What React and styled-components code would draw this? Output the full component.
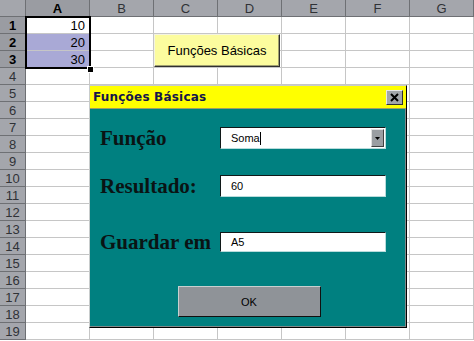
import React from 'react';
import styled, { createGlobalStyle } from 'styled-components';

const GlobalStyle = createGlobalStyle`
  html, body {
    margin: 0;
    padding: 0;
    background: #ffffff;
    overflow: hidden;
  }
  body {
    font-family: 'Liberation Sans', Arial, sans-serif;
  }
`;

const COLS = ['A', 'B', 'C', 'D', 'E', 'F', 'G'];
const ROWS = Array.from({ length: 19 }, (_, i) => i + 1);
const DATA = { 1: '10', 2: '20', 3: '30' };

// Planilha de fundo
const Sheet = styled.div`
  position: relative;
  width: 474px;
  height: 341px;
  display: grid;
  grid-template-columns: 26px repeat(7, 64px);
  grid-template-rows: 17px repeat(19, 17px);
  background: #ffffff;
  overflow: hidden;
`;

const Corner = styled.div`
  background: #a4a6ac;
  border-right: 1px solid #6e7074;
  border-bottom: 1px solid #6e7074;
  box-sizing: border-box;
`;

const ColHeader = styled.div`
  background: ${p => (p.$active ? '#9a9ca2' : '#a4a6ac')};
  border-right: 1px solid #6e7074;
  border-bottom: 1px solid #6e7074;
  box-sizing: border-box;
  display: flex;
  align-items: center;
  justify-content: center;
  font-size: 13px;
  font-weight: ${p => (p.$active ? 'bold' : 'normal')};
  color: ${p => (p.$active ? '#000000' : '#303236')};
`;

const RowHeader = styled(ColHeader)`
  font-size: 13px;
`;

const Cell = styled.div`
  background: ${p => (p.$selected ? '#a9a9d6' : '#ffffff')};
  border-right: 1px solid #c6c6c6;
  border-bottom: 1px solid #c6c6c6;
  box-sizing: border-box;
  display: flex;
  align-items: center;
  justify-content: flex-end;
  padding-right: 4px;
  font-size: 13px;
  color: #000000;
`;

const Selection = styled.div`
  position: absolute;
  left: 25px;
  top: 16px;
  width: 66px;
  height: 53px;
  border: 2px solid #000000;
  box-sizing: border-box;
  pointer-events: none;
`;

const FillHandle = styled.div`
  position: absolute;
  left: 87px;
  top: 66px;
  width: 5px;
  height: 5px;
  background: #000000;
  border: 1px solid #ffffff;
  box-sizing: content-box;
`;

// Botão flutuante na planilha
const SheetButton = styled.button`
  position: absolute;
  left: 154px;
  top: 34px;
  width: 126px;
  height: 33px;
  margin: 0;
  padding: 0;
  background: #fcfc9e;
  border: 1px solid;
  border-color: #f4f4e0 #303030 #303030 #f4f4e0;
  box-shadow: inset -1px -1px 0 #a0a070;
  font-family: 'Liberation Sans', Arial, sans-serif;
  font-size: 13px;
  color: #000000;
`;

// Janela do formulário
const Dialog = styled.div`
  position: absolute;
  left: 89px;
  top: 85px;
  width: 318px;
  height: 243px;
  box-sizing: border-box;
  background: #008080;
  border: 1px solid;
  border-color: #c8cccc #000000 #000000 #c8cccc;
  box-shadow: inset -1px -1px 0 #808888;
  display: flex;
  flex-direction: column;
`;

const TitleBar = styled.div`
  height: 22px;
  background: #ffff00;
  display: flex;
  align-items: center;
  justify-content: space-between;
  padding: 0 3px 0 3px;
  border-bottom: 1px solid #a0a060;
`;

const Title = styled.span`
  font-family: 'DejaVu Sans', Verdana, sans-serif;
  font-weight: bold;
  font-size: 12px;
  color: #14144a;
  letter-spacing: 0.2px;
`;

const CloseButton = styled.div`
  width: 17px;
  height: 15px;
  box-sizing: border-box;
  background: #a2a6aa;
  border: 1px solid;
  border-color: #e8e8e8 #303030 #303030 #e8e8e8;
  display: flex;
  align-items: center;
  justify-content: center;
`;

const Body = styled.div`
  flex: 1;
  padding: 0 0 0 10px;
  display: flex;
  flex-direction: column;
`;

const Field = styled.div`
  display: grid;
  grid-template-columns: 120px 166px;
  align-items: center;
  height: ${p => p.$h || 22}px;
  margin-top: ${p => p.$top}px;
`;

const Label = styled.span`
  font-family: 'Liberation Serif', 'Times New Roman', serif;
  font-weight: bold;
  font-size: 21px;
  line-height: 22px;
  color: #0a1414;
`;

const Input = styled.div`
  height: ${p => p.$h || 22}px;
  box-sizing: border-box;
  background: #ffffff;
  border: 1px solid;
  border-color: #101818 #b8dcdc #b8dcdc #101818;
  display: flex;
  align-items: center;
  padding-left: 10px;
  font-size: 11px;
  color: #000000;
`;

const Caret = styled.span`
  display: inline-block;
  width: 1px;
  height: 13px;
  background: #000000;
`;

const ComboText = styled.span`
  flex: 1;
  display: flex;
  align-items: center;
`;

const DropButton = styled.div`
  width: 13px;
  height: 18px;
  margin-right: 1px;
  box-sizing: border-box;
  background: #9a9ea2;
  border: 1px solid;
  border-color: #e0e0e0 #404040 #404040 #e0e0e0;
  display: flex;
  align-items: center;
  justify-content: center;
`;

const OkButton = styled.div`
  align-self: center;
  margin: 35px 0 0 -8px;
  width: 143px;
  height: 31px;
  box-sizing: border-box;
  background: #8f9398;
  border: 1px solid;
  border-color: #c8d0d0 #101010 #101010 #c8d0d0;
  display: flex;
  align-items: center;
  justify-content: center;
  font-size: 11px;
  color: #000000;
`;

export default function App() {
  return (
    <>
      <GlobalStyle />
      <Sheet>
        <Corner />
        {COLS.map(c => (
          <ColHeader key={c} $active={c === 'A'}>{c}</ColHeader>
        ))}
        {ROWS.map(r => (
          <React.Fragment key={r}>
            <RowHeader $active={r <= 3}>{r}</RowHeader>
            {COLS.map(c => (
              <Cell key={c} $selected={c === 'A' && (r === 2 || r === 3)}>
                {c === 'A' ? DATA[r] : ''}
              </Cell>
            ))}
          </React.Fragment>
        ))}
        <Selection />
        <FillHandle />

        <SheetButton>Funções Básicas</SheetButton>

        <Dialog>
          <TitleBar>
            <Title>Funções Básicas</Title>
            <CloseButton>
              <svg width="9" height="9" viewBox="0 0 9 9">
                <path d="M1 1 L8 8 M8 1 L1 8" stroke="#000" strokeWidth="2" />
              </svg>
            </CloseButton>
          </TitleBar>
          <Body>
            <Field $top={18}>
              <Label>Função</Label>
              <Input>
                <ComboText>Soma<Caret /></ComboText>
                <DropButton>
                  <svg width="5" height="3" viewBox="0 0 5 3">
                    <path d="M0 0 H5 L2.5 3 Z" fill="#000" />
                  </svg>
                </DropButton>
              </Input>
            </Field>
            <Field $top={26}>
              <Label>Resultado:</Label>
              <Input>60</Input>
            </Field>
            <Field $top={34} $h={20}>
              <Label>Guardar em</Label>
              <Input $h={20}>A5</Input>
            </Field>
            <OkButton>OK</OkButton>
          </Body>
        </Dialog>
      </Sheet>
    </>
  );
}
